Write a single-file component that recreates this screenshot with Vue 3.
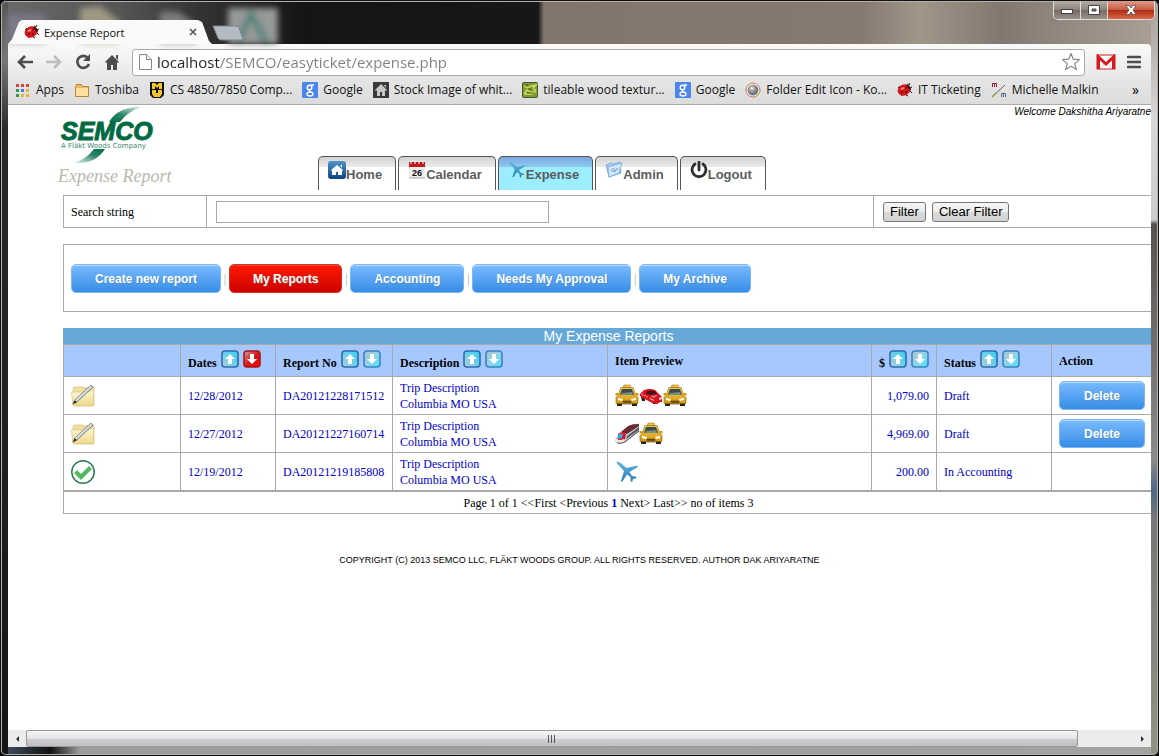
<script setup>
    import { ref } from 'vue';

    const address = ref('localhost/SEMCO/easyticket/expense.php');
    const searchText = ref('');
    const activeFilter = ref('My Reports');

    const bookmarks = [
        { icon: 'apps', label: 'Apps' },
        { icon: 'folder', label: 'Toshiba' },
        { icon: 'mizzou', label: 'CS 4850/7850 Comp...' },
        { icon: 'google', label: 'Google' },
        { icon: 'house-dark', label: 'Stock Image of whit...' },
        { icon: 'texture', label: 'tileable wood textur...' },
        { icon: 'google', label: 'Google' },
        { icon: 'ball', label: 'Folder Edit Icon - Ko...' },
        { icon: 'ladybug', label: 'IT Ticketing' },
        { icon: 'mm', label: 'Michelle Malkin' }
    ];

    const menu = [
        { icon: 'home-blue', label: 'Home' },
        { icon: 'calendar', label: 'Calendar' },
        { icon: 'plane', label: 'Expense', active: true },
        { icon: 'admin', label: 'Admin' },
        { icon: 'power', label: 'Logout' }
    ];

    const filters = ['Create new report', 'My Reports', 'Accounting', 'Needs My Approval', 'My Archive'];

    const columns = [
        { key: 'icon', label: '' },
        { key: 'date', label: 'Dates', sortable: true, sorted: 'down' },
        { key: 'no', label: 'Report No', sortable: true },
        { key: 'desc', label: 'Description', sortable: true },
        { key: 'items', label: 'Item Preview' },
        { key: 'total', label: '$', sortable: true },
        { key: 'status', label: 'Status', sortable: true },
        { key: 'action', label: 'Action' }
    ];

    const reports = [
        { date: '12/28/2012', no: 'DA20121228171512', items: ['taxi', 'car', 'taxi'], total: '1,079.00', status: 'Draft' },
        { date: '12/27/2012', no: 'DA20121227160714', items: ['train', 'taxi'], total: '4,969.00', status: 'Draft' },
        { date: '12/19/2012', no: 'DA20121219185808', items: ['plane'], total: '200.00', status: 'In Accounting' }
    ];
</script>

<template>
    <!-- shared icons -->
    <svg class="sprite" width="0" height="0" aria-hidden="true">
        <defs>
            <linearGradient id="g-blue" x1="0" y1="0" x2="0" y2="1"><stop offset="0" stop-color="#4f93c8" /><stop offset="1" stop-color="#0b4583" /></linearGradient>
            <linearGradient id="g-up" x1="1" y1="0" x2="0" y2="1"><stop offset="0" stop-color="#35d0f5" /><stop offset=".5" stop-color="#6ad0e8" /><stop offset="1" stop-color="#c0ccd8" /></linearGradient>
            <linearGradient id="g-down" x1="0" y1="0" x2="1" y2="1"><stop offset="0" stop-color="#b4c4d0" /><stop offset=".5" stop-color="#8fd3e6" /><stop offset="1" stop-color="#45e3ff" /></linearGradient>
            <linearGradient id="g-red" x1="0" y1="0" x2="1" y2="1"><stop offset="0" stop-color="#d8a0a0" /><stop offset=".5" stop-color="#d21a1a" /><stop offset="1" stop-color="#ff0000" /></linearGradient>
            <linearGradient id="g-folder" x1="0" y1="0" x2="0" y2="1"><stop offset="0" stop-color="#fffbe0" /><stop offset="1" stop-color="#efd98a" /></linearGradient>
            <linearGradient id="g-taxi" x1="0" y1="0" x2="0" y2="1"><stop offset="0" stop-color="#f4cd4a" /><stop offset="1" stop-color="#d39a12" /></linearGradient>
            <linearGradient id="g-plane" x1="0" y1="0" x2="0" y2="1"><stop offset="0" stop-color="#62b5de" /><stop offset="1" stop-color="#277eb2" /></linearGradient>
            <linearGradient id="g-top" x1="0" y1="1" x2="1" y2="0"><stop offset="0" stop-color="#00704b" /><stop offset=".4" stop-color="#2c8469" /><stop offset="1" stop-color="#ffffff" /></linearGradient>
            <linearGradient id="g-bottom" x1="1" y1="0" x2="0" y2="1"><stop offset="0" stop-color="#00704b" /><stop offset=".4" stop-color="#2c8469" /><stop offset="1" stop-color="#ffffff" /></linearGradient>
            <radialGradient id="g-ball" cx=".4" cy=".35"><stop offset="0" stop-color="#fff" /><stop offset=".4" stop-color="#aaa" /><stop offset="1" stop-color="#777" /></radialGradient>
        </defs>
        <symbol id="ladybug" viewBox="0 0 16 16">
            <path d="M10 2l2 1 1-2M13 6l2-1M13 9l2 2M4 12l1 2M9 13l2 1M3 4L1 6" stroke="#222" stroke-width="1" fill="none" />
            <ellipse cx="7" cy="8" rx="6.500" ry="5.500" transform="rotate(-25 7 8)" fill="#d8151b" />
            <path d="M10 3q3 0 4 4l-1 2q-2-4-4-5z" fill="#3a1010" />
            <path d="M3 7l3-2 2 1-3 2z" fill="#ff8a80" />
            <circle cx="5" cy="10" r="1" fill="#520006" /><circle cx="9" cy="10" r="1" fill="#520006" /><circle cx="9" cy="6" r=".8" fill="#520006" />
        </symbol>
        <symbol id="apps" viewBox="0 0 16 16">
            <path d="M1 2h3v3H1zM6 2h3v3H6zM11 2h3v3h-3z" fill="#d9453c" />
            <path d="M1 7h3v3H1z" fill="#2f9a57" /><path d="M6 7h3v3H6z" fill="#3b7ded" /><path d="M11 7h3v3h-3z" fill="#e9b32f" />
            <path d="M1 12h3v3H1z" fill="#2f9a57" /><path d="M6 12h3v3H6zM11 12h3v3h-3z" fill="#e9b32f" />
        </symbol>
        <symbol id="folder" viewBox="0 0 16 16">
            <path d="M1.500 4.500l1-2h5l1 2h6v10h-13z" fill="#e9b95c" stroke="#b98836" />
            <path d="M2 6h12v8H2z" fill="#ffdf9c" />
        </symbol>
        <symbol id="mizzou" viewBox="0 0 16 16">
            <path d="M1 0h14v13l-3 3H4l-3-3z" fill="#111" />
            <path d="M3 1h3l2 2 2-2h3v6h-3V4L8 6 6 4v3H3z" fill="#f5c62c" />
            <path d="M3 8h4v3h2V8h4v4l-2 3H5l-2-3z" fill="#f5c62c" />
        </symbol>
        <symbol id="google" viewBox="0 0 16 16">
            <rect width="16" height="16" rx="1" fill="#4a86ee" />
            <circle cx="7.500" cy="5.500" r="2.300" fill="none" stroke="#fff" stroke-width="1.500" />
            <path d="M9 3h3M8 8q-2 1 1 2" fill="none" stroke="#fff" stroke-width="1.300" />
            <ellipse cx="8" cy="12" rx="3" ry="2" fill="none" stroke="#fff" stroke-width="1.300" />
        </symbol>
        <symbol id="house-dark" viewBox="0 0 16 16">
            <rect width="16" height="16" fill="#3a3a3a" />
            <path d="M8 2l6 6-1 1-1-1v6H9v-4H7v4H4V8L3 9 2 8z" fill="#c8c8c8" /><path d="M11 3h2v3z" fill="#c8c8c8" />
        </symbol>
        <symbol id="texture" viewBox="0 0 16 16">
            <rect x=".5" y=".5" width="15" height="15" rx="1" fill="#7d9840" stroke="#465824" />
            <path d="M2 4l4 2 3-2 5-1-4 4 4 1M2 12l3-4 3 2 5 0-3 2H3" fill="none" stroke="#d3e64c" stroke-width="1.300" />
            <path d="M6 7h5M5 11h7M3 3h3" stroke="#465824" />
        </symbol>
        <symbol id="ball" viewBox="0 0 16 16">
            <circle cx="8" cy="8" r="7" fill="#fff" stroke="#d46a7c" /><path d="M1 8a7 7 0 0 1 7-7" stroke="#d8b33a" fill="none" /><path d="M15 8a7 7 0 0 1-7 7" stroke="#a6c34e" fill="none" />
            <circle cx="8" cy="8" r="5.500" fill="url(#g-ball)" />
        </symbol>
        <symbol id="mm" viewBox="0 0 16 16">
            <path d="M1.500 5V1.500h4V5M3.500 2v3" stroke="#8a2430" fill="none" />
            <path d="M10.500 15v-3.500h4V15M12.500 12v3" stroke="#5b6a78" fill="none" />
            <path d="M1 15L14 3" stroke="#666" /><path d="M1 15l4-4" stroke="#9a9a30" stroke-width="1.500" />
        </symbol>
        <symbol id="home-blue" viewBox="0 0 18 18">
            <rect width="18" height="18" rx="3" fill="url(#g-blue)" />
            <path d="M9 4l6 5-1 1v4h-4v-3H8v3H4v-4L3 9z" fill="#fff" /><path d="M12 4h2v3z" fill="#fff" />
        </symbol>
        <symbol id="calendar" viewBox="0 0 18 18">
            <rect x="1" y="4" width="16" height="13" fill="#ececec" /><rect x="1" y="1" width="16" height="5" fill="#c3161c" />
            <path d="M3 0v3M7 0v3M11 0v3M15 0v3" stroke="#fff" /><path d="M1 17h16" stroke="#aaa" />
            <text x="9" y="15" text-anchor="middle" font-family="Liberation Sans, sans-serif" font-weight="bold" font-size="9" fill="#111">26</text>
        </symbol>
        <symbol id="plane" viewBox="0 0 24 24">
            <path d="M2 1.500Q1 3 3.500 5L9 11 6 21 7 22 12 14.500 15.500 17 15.500 20.500 17 22.500 18 19 22 18 20.500 16.500 17 16 14.500 12 23 7 22 5.500 11.500 8 5.500 3Q3 1 2 1.500z" fill="url(#g-plane)" />
        </symbol>
        <symbol id="admin" viewBox="0 0 18 18">
            <path d="M1 4l5-2 2 1 7-2 1 11-12 4z" fill="#a9cff5" stroke="#6d9edb" stroke-width=".8" /><path d="M3 6l14-4-3 10-10 4z" fill="#d5e9fd" stroke="#78a6e0" stroke-width=".8" />
            <circle cx="8" cy="9" r="1.500" fill="none" stroke="#7fa9de" /><path d="M9 11l4-4" stroke="#7fa9de" stroke-width="1.300" />
        </symbol>
        <symbol id="power" viewBox="0 0 18 18">
            <path d="M5 3a7 7 0 1 0 8 0" fill="none" stroke="#2f2f2f" stroke-width="2.800" stroke-linecap="round" /><path d="M9 1v8" stroke="#2f2f2f" stroke-width="2.800" stroke-linecap="round" />
        </symbol>
        <symbol id="folder-edit" viewBox="0 0 24 24">
            <path d="M2 21V5l1-2h9l1 1 10-1v19H3z" fill="#f0dea0" stroke="#d9c27c" stroke-width=".7" />
            <path d="M.5 8h18l4-3v16.500H2z" fill="url(#g-folder)" stroke="#dac583" stroke-width=".7" />
            <path d="M20 1l2 2L6 18l-4 2 2-4z" fill="#c4ccce" stroke="#6d7474" stroke-width=".8" /><path d="M20.500 2L4.500 17" stroke="#fff" stroke-width=".8" />
            <path d="M2 20l1.500-3.500L6 18z" fill="#222" />
        </symbol>
        <symbol id="check" viewBox="0 0 24 24">
            <circle cx="12" cy="12" r="11.200" fill="#fff" stroke="#2c7c50" stroke-width="1.500" />
            <path d="M3 13l3-3 4 4 8-8 3 3L10 20z" fill="#52b963" />
        </symbol>
        <symbol id="taxi" viewBox="0 0 24 24">
            <path d="M2 17h5v5H2zM17 17h5v5h-5z" fill="#222" />
            <path d="M9 1h6l1 3H8z" fill="#efbf38" stroke="#a37412" stroke-width=".5" />
            <path d="M6 3.500h12l3 8 2 2v6H1v-6l2-2z" fill="url(#g-taxi)" stroke="#8a6410" stroke-width=".6" />
            <path d="M7 5h10l2 6H5z" fill="#3b4a4a" /><path d="M7 9l10-1 1 3H5.500z" fill="#7d8b82" />
            <path d="M.5 9h3v2.500h-3zM20.500 9h3v2.500h-3z" fill="#d39a12" />
            <path d="M3 14l5 1-1 2-4-1zM21 14l-5 1 1 2 4-1z" fill="#fff" /><path d="M8 17h8v1.500H8zM6 20h12" stroke="#67490a" fill="#67490a" stroke-width=".7" />
        </symbol>
        <symbol id="car" viewBox="0 0 24 24">
            <path d="M2 13h4v4H3zM14 17h4v3h-4zM21 14h2v4h-2z" fill="#222" />
            <path d="M1 10l4-4q6-2 11 0l4 4 3 3v4l-5 3-5-1-9-5-3-2z" fill="#d8141c" />
            <path d="M8 7q5-1 8 0l2 3-6 1-5-1z" fill="#471419" /><path d="M11 12l8-1-4 3z" fill="#ff6d6d" />
            <path d="M11 14l4 2v1l-4-2zM20 14l3-1v2l-3 1z" fill="#f4dede" /><path d="M2 10l7 3" stroke="#ff7b78" />
        </symbol>
        <symbol id="train" viewBox="0 0 24 24">
            <path d="M1 17L13 5q4-3 11-3v7L9 20q-4 2-8 0z" fill="#c9ccd0" stroke="#777" stroke-width=".5" />
            <path d="M6 10L13 4q4-2 11-2v2L12 12z" fill="#6b2a30" /><path d="M12 14l12-9v3L11 17z" fill="#555b62" />
            <path d="M3 12q2-2 5-2l3 2-1 5q-3 2-7 1z" fill="#d8151f" /><path d="M3 13q2-2 5-1l-1 4q-3 1-5 0z" fill="#3aa9e8" />
            <path d="M1 17q4 2 8 0v3q-4 2-8 0z" fill="#e8e9ea" /><path d="M2 21q4 1 8-1l14-11" fill="none" stroke="#333" stroke-width=".8" />
        </symbol>
        <symbol id="sort-up" viewBox="0 0 18 18">
            <rect x="1" y="1" width="16" height="16" rx="3" fill="url(#g-up)" stroke="#2c6cae" stroke-width="1.600" /><path d="M9 4l5 5h-3v5H7V9H4z" fill="#fff" />
        </symbol>
        <symbol id="sort-down" viewBox="0 0 18 18">
            <rect x="1" y="1" width="16" height="16" rx="3" fill="url(#g-down)" stroke="#3c83c0" stroke-width="1.600" /><path d="M9 14L4 9h3V4h4v5h3z" fill="#fff" />
        </symbol>
        <symbol id="sort-down-on" viewBox="0 0 18 18">
            <rect x="1" y="1" width="16" height="16" rx="3" fill="url(#g-red)" stroke="#a81418" stroke-width="1.600" /><path d="M9 14L4 9h3V4h4v5h3z" fill="#fff" />
        </symbol>
    </svg>

    <div class="window">
        <header class="titlebar">
            <svg class="glass" width="300" height="44" viewBox="0 0 300 44" aria-hidden="true">
                <path d="M8 14h38v30H8z" fill="#8d8ca8" opacity=".5" />
                <path d="M80 8l20-2 18 14v24H80z" fill="#b9b494" opacity=".7" />
                <path d="M160 12h18l18 12v20h-36z" fill="#999" opacity=".7" />
                <path d="M228 8h50v36h-50z" fill="#969a98" />
                <path d="M238 42l13-28 15 28" fill="none" stroke="#4f7f76" stroke-width="5" />
            </svg>
            <div class="tab">
                <svg class="i16"><use href="#ladybug" /></svg>
                <span class="tab-title">Expense Report</span>
                <button class="tab-close" aria-label="Close tab">
                    <svg width="8" height="8" viewBox="0 0 8 8"><path d="M1 1l6 6M7 1L1 7" stroke="#555" stroke-width="1.600" /></svg>
                </button>
            </div>
            <button class="new-tab" aria-label="New tab">
                <svg width="32" height="16" viewBox="0 0 32 16"><path d="M1 1h23q2 0 3 2l4 11q0 1-2 1H9q-2 0-3-2z" fill="#b3bbc3" stroke="#7d858c" /></svg>
            </button>
            <div class="controls">
                <button class="control" aria-label="Minimize"><svg width="12" height="10" viewBox="0 0 12 10"><rect x=".5" y="4.500" width="11" height="4" fill="#fff" stroke="#444" /></svg></button>
                <button class="control" aria-label="Maximize"><svg width="12" height="10" viewBox="0 0 12 10"><path d="M.5.5h11v9H.5zM4 4v2h4V4z" fill="#fff" fill-rule="evenodd" stroke="#444" /></svg></button>
                <button class="control close" aria-label="Close"><svg width="12" height="10" viewBox="0 0 12 10"><path d="M1 .5h3l2 2.500 2-2.500h3L8 5l3 4.500H8L6 7 4 9.500H1L4 5z" fill="#fff" stroke="#555" stroke-width=".8" /></svg></button>
            </div>
        </header>

        <div class="toolbar">
            <button class="tool" aria-label="Back"><svg width="18" height="18" viewBox="0 0 18 18"><path d="M17 9H4M9 3L3 9l6 6" fill="none" stroke="#4d4d4d" stroke-width="2.600" /></svg></button>
            <button class="tool" aria-label="Forward"><svg width="18" height="18" viewBox="0 0 18 18"><path d="M1 9h13M9 3l6 6-6 6" fill="none" stroke="#bdbdbd" stroke-width="2.600" /></svg></button>
            <button class="tool" aria-label="Reload"><svg width="18" height="18" viewBox="0 0 18 18"><path d="M14 5a6 6 0 1 0 1 6" fill="none" stroke="#4d4d4d" stroke-width="2.600" /><path d="M16 1v7H9z" fill="#4d4d4d" /></svg></button>
            <button class="tool" aria-label="Home"><svg width="18" height="18" viewBox="0 0 18 18"><path d="M9 2l7 7-1 1-1-1v8h-4v-5H8v5H4V9l-1 1-1-1z" fill="#4d4d4d" /><path d="M13 2h2v5l-2-2z" fill="#4d4d4d" /></svg></button>
            <label class="omnibox">
                <svg width="13" height="16" viewBox="0 0 13 16"><path d="M.5.5h7l5 5v10H.5z" fill="#fff" stroke="#888" /><path d="M7.500.5v5h5" fill="#eee" stroke="#888" /></svg>
                <input v-model="address" class="address" type="text" aria-label="Address">
                <svg width="20" height="20" viewBox="0 0 20 20"><path d="M10 1.500l2.300 5.700 6.200.400-4.800 4 1.600 6L10 14.300 4.700 17.600l1.600-6-4.800-4 6.200-.4z" fill="#fff" stroke="#888" stroke-width="1.200" stroke-linejoin="round" /></svg>
            </label>
            <button class="tool" aria-label="Gmail"><svg width="20" height="16" viewBox="0 0 20 16"><rect x="1" y="1" width="18" height="14" fill="#fff" stroke="#c22" /><path d="M2.500 15V3l7.500 7 7.500-7v12" fill="none" stroke="#d7191f" stroke-width="3" /><path d="M5 14l3-4M15 14l-3-4" stroke="#ccc" /></svg></button>
            <button class="tool" aria-label="Menu"><svg width="14" height="14" viewBox="0 0 14 14"><path d="M1 2h12M1 7h12M1 12h12" stroke="#4d4d4d" stroke-width="2.600" stroke-linecap="round" /></svg></button>
        </div>

        <nav class="bookmarks" aria-label="Bookmarks">
            <a v-for="(item, i) in bookmarks" :key="i" href="#" class="bookmark">
                <svg class="i16"><use :href="'#' + item.icon" /></svg>{{ item.label }}
            </a>
            <button class="more" aria-label="More bookmarks">»</button>
        </nav>

        <main class="page">
            <div class="masthead">
                <div class="brand">
                    <svg width="120" height="60" viewBox="0 0 120 60" role="img" aria-label="SEMCO, A Fläkt Woods Company">
                        <path d="M59 17Q67 2 94 1Q78 6 70 17z" fill="url(#g-top)" />
                        <path d="M55 44Q45 60 22 58Q36 55 44 44z" fill="url(#g-bottom)" />
                        <text x="11" y="35" font-family="Liberation Sans, sans-serif" font-weight="bold" font-style="italic" font-size="25" fill="#006a43" stroke="#006a43" stroke-width="1">SEMCO</text>
                        <text x="11" y="43" font-family="DejaVu Sans, sans-serif" font-size="7" fill="#3e8570">A Fläkt Woods Company</text>
                    </svg>
                    <h1 class="page-name">Expense Report</h1>
                </div>
                <nav class="menu" aria-label="Main">
                    <a v-for="item in menu" :key="item.label" href="#" class="menu-item" :class="{ active: item.active }">
                        <svg class="i18"><use :href="'#' + item.icon" /></svg><span>{{ item.label }}</span>
                    </a>
                </nav>
                <p class="welcome">Welcome Dakshitha Ariyaratne</p>
            </div>

            <form class="search" @submit.prevent>
                <label class="search-label" for="search">Search string</label>
                <div class="search-field"><input id="search" v-model="searchText" type="text"></div>
                <div class="search-actions">
                    <button type="submit">Filter</button>
                    <button type="button" @click="searchText = ''">Clear Filter</button>
                </div>
            </form>

            <div class="filters">
                <template v-for="(name, i) in filters" :key="name">
                    <span v-if="i" class="divider">|</span>
                    <button class="pill" :class="{ selected: name === activeFilter }" @click="activeFilter = name">{{ name }}</button>
                </template>
            </div>

            <table class="reports">
                <caption>My Expense Reports</caption>
                <colgroup>
                    <col v-for="col in columns" :key="col.key" :class="'col-' + col.key">
                </colgroup>
                <thead>
                    <tr>
                        <th v-for="col in columns" :key="col.key" scope="col">
                            <div class="heading">
                                <span>{{ col.label }}</span>
                                <template v-if="col.sortable">
                                    <button class="sort" :aria-label="'Sort up by ' + col.label"><svg class="i18"><use href="#sort-up" /></svg></button>
                                    <button class="sort" :aria-label="'Sort down by ' + col.label"><svg class="i18"><use :href="col.sorted ? '#sort-down-on' : '#sort-down'" /></svg></button>
                                </template>
                            </div>
                        </th>
                    </tr>
                </thead>
                <tbody>
                    <tr v-for="report in reports" :key="report.no">
                        <td><svg class="i24"><use :href="report.status === 'Draft' ? '#folder-edit' : '#check'" /></svg></td>
                        <td><a href="#">{{ report.date }}</a></td>
                        <td><a href="#">{{ report.no }}</a></td>
                        <td><a href="#">Trip Description<br>Columbia MO USA</a></td>
                        <td><div class="items"><svg v-for="(item, i) in report.items" :key="i" class="i24"><use :href="'#' + item" /></svg></div></td>
                        <td class="total"><a href="#">{{ report.total }}</a></td>
                        <td><a href="#">{{ report.status }}</a></td>
                        <td><button v-if="report.status === 'Draft'" class="pill delete">Delete</button></td>
                    </tr>
                </tbody>
                <tfoot>
                    <tr>
                        <td colspan="8">Page 1 of 1 &lt;&lt;First &lt;Previous <a href="#"><b>1</b></a> Next&gt; Last&gt;&gt; no of items 3</td>
                    </tr>
                </tfoot>
            </table>

            <footer class="copyright">COPYRIGHT (C) 2013 SEMCO LLC, FLÄKT WOODS GROUP. ALL RIGHTS RESERVED. AUTHOR DAK ARIYARATNE</footer>
        </main>

        <div class="scrollbar">
            <button class="arrow" aria-label="Scroll left"><svg width="5" height="8" viewBox="0 0 5 8"><path d="M4 1v6L1 4z" fill="#333" /></svg></button>
            <div class="track"><div class="thumb"><svg width="10" height="8" viewBox="0 0 10 8"><path d="M1.500 0v8M4.500 0v8M7.500 0v8" stroke="#555" /></svg></div></div>
            <button class="arrow" aria-label="Scroll right"><svg width="5" height="8" viewBox="0 0 5 8"><path d="M1 1v6l3-3z" fill="#333" /></svg></button>
        </div>
    </div>
</template>

<style>
    body {
        margin: 0;
        background: #000;
    }
</style>

<style scoped>
    .window {
        box-sizing: border-box;
        height: 100vh;
        padding: 0 8px 9px;
        display: flex;
        flex-direction: column;
        overflow: hidden;
        border-radius: 6px;
        box-shadow: inset 0 0 0 1px #111, inset 0 0 0 2px #b5b0ab;
        background:
            linear-gradient(to bottom, #555 0, #777 60px, #2a2a2a 130px, #151515 100%) left / 8px 100% no-repeat,
            linear-gradient(to bottom, #a69c94 0, #d8d8d8 120px, #ccc 220px, #55524f 224px, #8b8b8b 460px, #4d6788 490px, #777 520px, #8f9483 100%) right / 8px 100% no-repeat,
            linear-gradient(to right, #45566a 0, #111 50px, #9a9d9b 80px, #a2a4a3 100%) bottom / 100% 9px no-repeat,
            linear-gradient(to right, #6a6a6a 0, #555 120px, #333 200px, #151515 300px, #171717 538px, #82756c 544px, #857970 860px, #a1968a 920px, #83786f 1000px, #aaa096 100%);
    }

    button {
        padding: 0;
        border: 0;
        background: none;
        font-family: inherit;
    }

    svg {
        display: block;
        flex: none;
    }

    .sprite {
        position: absolute;
    }

    .i16 {
        width: 16px;
        height: 16px;
    }

    .i18 {
        width: 18px;
        height: 18px;
    }

    .i24 {
        width: 24px;
        height: 24px;
    }

    .titlebar,
    .toolbar,
    .bookmarks {
        font-family: "Open Sans", "Noto Sans", sans-serif;
        font-size: 12px;
        color: #111;
    }

    .titlebar {
        height: 44px;
        display: flex;
        align-items: flex-end;
    }

    .glass {
        position: absolute;
        top: 0;
        left: 0;
        filter: blur(3px);
    }

    .tab {
        position: relative;
        box-sizing: border-box;
        width: 204px;
        height: 24px;
        padding: 0 15px 0 16px;
        display: flex;
        align-items: center;
        gap: 4px;
        background: #fafafa;
        clip-path: polygon(0 100%, 4px 80%, 11px 8%, 14px 0, 190px 0, 194px 8%, 201px 88%, 100% 100%);
    }

    .tab-title {
        flex: 1;
        font-size: 11px;
    }

    .new-tab {
        position: relative;
        padding-bottom: 3px;
    }

    .controls {
        align-self: flex-start;
        margin: 1px -4px 0 auto;
        display: flex;
        border: 1px solid #ddd;
        border-top: 0;
        border-radius: 0 0 5px 5px;
        overflow: hidden;
    }

    .control {
        width: 27px;
        height: 18px;
        display: flex;
        align-items: center;
        justify-content: center;
        border-right: 1px solid #ddd;
        background: linear-gradient(#b5aca5, #8d837b 50%, #746a62 50%, #9b918a);
    }

    .close {
        width: 46px;
        border-right: 0;
        background: linear-gradient(#dc9c88, #c95a40 50%, #ad2a13 50%, #d86a4b);
    }

    .toolbar {
        height: 33px;
        box-sizing: border-box;
        padding: 3px 10px 0 8px;
        display: flex;
        align-items: center;
        gap: 11px;
        border-radius: 0 4px 0 0;
        background: linear-gradient(#fafafa, #e8e8e8);
    }

    .omnibox {
        flex: 1;
        box-sizing: border-box;
        height: 27px;
        padding: 0 3px 0 6px;
        display: flex;
        align-items: center;
        gap: 5px;
        border: 1px solid #aaa;
        border-radius: 3px;
        background: #fff;
    }

    .address {
        flex: 1;
        min-width: 0;
        padding: 0;
        border: 0;
        outline: 0;
        font-family: inherit;
        font-size: 15px;
        /* the host part is darker than the path */
        background: linear-gradient(to right, #222 62px, #808080 62px) text;
        color: transparent;
    }

    .bookmarks {
        box-sizing: border-box;
        height: 28px;
        padding: 0 12px 2px 7px;
        display: flex;
        align-items: center;
        gap: 10px;
        border-bottom: 1px solid #aaa;
        background: linear-gradient(#e6e6e6, #dcdcdc);
        font-size: 12px;
    }

    .bookmark {
        display: flex;
        align-items: center;
        gap: 5px;
        color: #111;
        text-decoration: none;
        white-space: nowrap;
    }

    .more {
        margin-left: auto;
        font-size: 14px;
    }

    .page {
        flex: 1;
        min-height: 0;
        overflow: hidden;
        background: #fff;
        font-family: "Liberation Serif", serif;
        font-size: 12px;
        line-height: 16px;
        color: #000;
    }

    .page a {
        color: #0000c8;
        text-decoration: none;
    }

    .masthead {
        height: 90px;
        padding-left: 50px;
        display: flex;
    }

    .brand {
        flex: 0 0 260px;
    }

    .brand svg {
        margin-left: -8px;
    }

    .page-name {
        margin: 0;
        font-size: 18px;
        line-height: 22px;
        font-weight: normal;
        font-style: italic;
        color: #bbb8b0;
    }

    .menu {
        align-self: flex-end;
        margin-bottom: 5px;
        display: flex;
        gap: 2px;
    }

    .menu-item {
        box-sizing: border-box;
        height: 34px;
        padding: 4px 13px 0 9px;
        display: flex;
        border: 1px solid #555;
        border-bottom: 0;
        border-radius: 5px 5px 0 0;
        background: linear-gradient(#d2d2d2, #ececec 10px, #fff 10px);
        font-family: "Liberation Sans", sans-serif;
        font-size: 13px;
        font-weight: bold;
    }

    .menu-item span {
        padding-top: 6px;
        color: #5c5c5c;
    }

    .active {
        background: linear-gradient(#7ba4e2, #8ecbf0 10px, #9beeff 10px);
    }

    .welcome {
        margin: 0 0 0 auto;
        flex: 0 0 136px;
        white-space: nowrap;
        font-family: "Liberation Sans", sans-serif;
        font-size: 10px;
        line-height: 14px;
        font-style: italic;
    }

    .search,
    .filters,
    .reports {
        margin-left: 55px;
        margin-right: -3px;
    }

    .search {
        display: grid;
        grid-template-columns: 142px 1fr 280px;
        border: 1px solid #a9a9a9;
    }

    .search > * {
        box-sizing: border-box;
        height: 31px;
        display: flex;
        align-items: center;
        padding: 0 7px;
    }

    .search > * + * {
        padding: 0 9px;
        border-left: 1px solid #a9a9a9;
    }

    .search input {
        box-sizing: border-box;
        width: 333px;
        height: 22px;
        border: 1px solid #a9a9a9;
    }

    .search-actions {
        gap: 6px;
    }

    .search-actions button {
        height: 20px;
        padding: 0 6px;
        border: 1px solid #777;
        border-radius: 3px;
        background: linear-gradient(#f6f6f6, #ebebeb 50%, #dadada 50%, #d2d2d2);
        font-family: "Liberation Sans", sans-serif;
        font-size: 13px;
    }

    .filters {
        margin-top: 16px;
        padding: 19px 7px 18px;
        display: flex;
        align-items: center;
        border: 1px solid #a9a9a9;
    }

    .divider {
        width: 8px;
        text-align: center;
        font-size: 12px;
        color: #9fb0b0;
    }

    .pill {
        height: 29px;
        padding: 0 23px;
        border: 1px solid #7db6f2;
        border-radius: 5px;
        background: linear-gradient(#79bbff, #378de5);
        box-shadow: inset 0 1px 0 #bbdaf7;
        font-family: "Liberation Sans", sans-serif;
        font-size: 12px;
        font-weight: bold;
        color: #fff;
        text-shadow: 1px 1px 0 #528ecc;
    }

    .selected {
        border-color: #d83526;
        background: linear-gradient(#fe1a00, #ce0100);
        box-shadow: inset 0 1px 0 #e0473a;
        text-shadow: 1px 1px 0 #b23e35;
    }

    .reports {
        width: calc(100% - 52px);
        margin-top: 16px;
        table-layout: fixed;
        border-collapse: collapse;
    }

    .reports caption {
        background: #66a8d8;
        font-family: "Liberation Sans", sans-serif;
        font-size: 14px;
        line-height: 16px;
        color: #fff;
    }

    .reports th,
    .reports td {
        height: 37px;
        padding: 0 7px;
        border: 1px solid #a9a9a9;
        text-align: left;
    }

    .reports th {
        height: 31px;
        background: #a6c8ff;
    }

    .reports .total {
        text-align: right;
    }

    .reports tfoot td {
        height: 21px;
        border-top-width: 2px;
        text-align: center;
    }

    .col-icon,
    .col-no {
        width: 117px;
    }

    .col-date {
        width: 95px;
    }

    .col-desc {
        width: 215px;
    }

    .col-total {
        width: 65px;
    }

    .col-status {
        width: 115px;
    }

    .col-action {
        width: 102px;
    }

    .heading {
        display: flex;
        align-items: flex-end;
        gap: 4px;
        white-space: nowrap;
    }

    .sort {
        margin-bottom: 3px;
    }

    .items {
        display: flex;
    }

    .delete {
        display: block;
        width: 86px;
    }

    .copyright {
        margin-top: 38px;
        text-align: center;
        font-family: "Liberation Sans", sans-serif;
        font-size: 9px;
    }

    .scrollbar {
        height: 17px;
        display: flex;
        background: #ececec;
    }

    .arrow {
        width: 18px;
        display: flex;
        align-items: center;
        justify-content: center;
    }

    .track {
        flex: 1;
        display: flex;
    }

    .thumb {
        box-sizing: border-box;
        width: 95%;
        display: flex;
        align-items: center;
        justify-content: center;
        border: 1px solid #999;
        border-radius: 2px;
        background: linear-gradient(#f5f5f5, #e4e4e6 50%, #cfcfd3 50%, #c0c0c4);
    }
</style>
